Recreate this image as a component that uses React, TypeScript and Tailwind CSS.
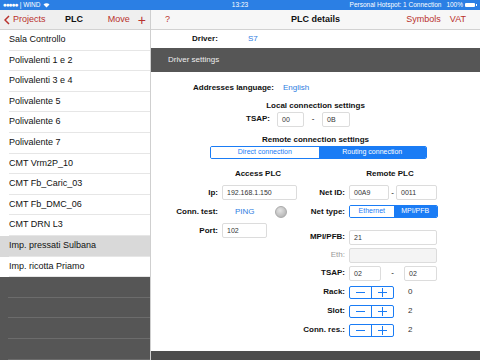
import React from "react";

const plcList = [
  "Sala Controllo",
  "Polivalenti 1 e 2",
  "Polivalenti 3 e 4",
  "Polivalente 5",
  "Polivalente 6",
  "Polivalente 7",
  "CMT Vrm2P_10",
  "CMT Fb_Caric_03",
  "CMT Fb_DMC_06",
  "CMT DRN L3",
  "Imp. pressati Sulbana",
  "Imp. ricotta Priamo",
];

const selected = "Imp. pressati Sulbana";

const StatusBar = () => (
  <div className="h-[10px] bg-[#2b7fe4] text-white text-[6.5px] leading-[10px] flex items-center px-[3px] relative">
    <div className="flex items-center gap-[2px]">
      <span className="tracking-[-1px]">●●●●●</span>
      <span>| WIND</span>
      <svg width="7" height="5" viewBox="0 0 14 10" className="ml-[1px]">
        <path d="M7 9 L1 3 A8.5 8.5 0 0 1 13 3 Z" fill="white" />
      </svg>
    </div>
    <div className="absolute left-0 right-0 text-center pointer-events-none">13:23</div>
    <div className="ml-auto flex items-center gap-[5px]">
      <span>Personal Hotspot: 1 Connection</span>
      <span className="flex items-center gap-[2px]">
        100%
        <span className="flex items-center">
          <span className="w-[10px] h-[4px] bg-white rounded-[1px]" />
          <span className="w-[1px] h-[2px] bg-white ml-[1px]" />
        </span>
      </span>
    </div>
  </div>
);

const Input = ({ value, w, disabled }: { value?: string; w: string; disabled?: boolean }) => (
  <div
    className={`${w} h-[15px] border border-[#dcdcdc] rounded-[2px] text-[7px] leading-[13px] pl-[4px] text-[#333] ${
      disabled ? "bg-[#f4f4f4]" : "bg-white"
    }`}
  >
    {value}
  </div>
);

const Segmented = ({ left, right, w, h }: { left: string; right: string; w: string; h: string }) => (
  <div className={`${w} ${h} flex border border-[#1a7cf5] rounded-[2px] text-[7px] overflow-hidden`}>
    <div className="flex-1 flex items-center justify-center text-[#1a7cf5] bg-white">{left}</div>
    <div className="flex-1 flex items-center justify-center text-white bg-[#1a7cf5]">{right}</div>
  </div>
);

const Stepper = () => (
  <div className="w-[45px] h-[13px] flex border border-[#1a7cf5] rounded-[2px] text-[#1a7cf5]">
    <div className="flex-1 flex items-center justify-center border-r border-[#1a7cf5]">
      <span className="w-[9px] h-[1px] bg-[#1a7cf5]" />
    </div>
    <div className="flex-1 flex items-center justify-center relative">
      <span className="w-[9px] h-[1px] bg-[#1a7cf5]" />
      <span className="absolute w-[1px] h-[9px] bg-[#1a7cf5]" />
    </div>
  </div>
);

const Label = ({ children, w, gray }: { children: React.ReactNode; w: string; gray?: boolean }) => (
  <div className={`${w} text-right pr-[4px] text-[8px] ${gray ? "text-[#9a9a9a] font-normal" : "font-bold text-[#111]"}`}>
    {children}
  </div>
);

export default function App() {
  return (
    <div className="w-[480px] h-[360px] overflow-hidden flex flex-col bg-white font-['Liberation_Sans',Arial,sans-serif]">
      <StatusBar />
      <div className="flex flex-1 min-h-0">
        {/* left: project list */}
        <aside className="w-[151px] border-r border-[#cfcfcf] flex flex-col">
          <div className="h-[20px] bg-[#efefef] border-b border-[#d2d2d2] flex items-center px-[4px] text-[9px] relative">
            <div className="flex items-center text-[#b9312d]">
              <svg width="6" height="10" viewBox="0 0 6 10">
                <path d="M5 1 L1 5 L5 9" fill="none" stroke="#b9312d" strokeWidth="1.5" />
              </svg>
              <span className="ml-[3px]">Projects</span>
            </div>
            <div className="absolute left-[65px] font-bold text-[#111]">PLC</div>
            <div className="ml-auto flex items-center gap-[8px] text-[#b9312d]">
              <span>Move</span>
              <span className="text-[14px] leading-none font-light">+</span>
            </div>
          </div>
          <div className="flex flex-col">
            {plcList.map((name) => (
              <div
                key={name}
                className={`h-[20.6px] flex items-center pl-[9px] text-[9px] text-[#111] ${
                  name === selected ? "bg-[#d9d9d9]" : "bg-white"
                }`}
              >
                <div className="flex-1 h-full flex items-center border-b border-[#e6e6e6]">{name}</div>
              </div>
            ))}
          </div>
          <div className="flex-1 bg-[#565656] flex flex-col">
            {[0, 1, 2, 3].map((i) => (
              <div key={i} className="h-[20.6px] ml-[8px] border-b border-[#6c6c6c]" />
            ))}
          </div>
        </aside>

        {/* right: PLC details */}
        <main className="flex-1 flex flex-col min-w-0">
          <div className="h-[20px] bg-[#f7f7f7] border-b border-[#d2d2d2] flex items-center px-[14px] text-[9px] relative">
            <span className="text-[#b9312d]">?</span>
            <div className="absolute left-0 right-0 text-center font-bold text-[#111]">PLC details</div>
            <div className="ml-auto flex items-center gap-[9px] text-[#b9312d] relative">
              <span>Symbols</span>
              <span>VAT</span>
            </div>
          </div>
          <div className="h-[18px] flex items-center text-[8px] pl-[41px]">
            <span className="w-[56px] font-bold text-[#111]">Driver:</span>
            <span className="text-[#2f7de1]">S7</span>
          </div>
          <div className="h-[24px] bg-[#565656] flex items-center pl-[17px] text-[8px] text-[#eee]">Driver settings</div>

          <div className="flex-1 flex flex-col">
            <div className="h-[12px] mt-[10px] flex items-center pl-[42px] text-[8px]">
              <span className="w-[90px] font-bold text-[#111]">Addresses language:</span>
              <span className="text-[#2f7de1]">English</span>
            </div>
            <div className="h-[12px] mt-[6px] flex items-center justify-center text-[8px] font-bold text-[#111]">
              Local connection settings
            </div>
            <div className="h-[14px] flex items-center pl-[95px]">
              <span className="w-[31px] text-[8px] font-bold text-[#111]">TSAP:</span>
              <Input value="00" w="w-[27px]" />
              <span className="w-[18px] text-center text-[8px]">-</span>
              <Input value="0B" w="w-[28px]" />
            </div>
            <div className="h-[12px] mt-[8px] flex items-center justify-center text-[8px] font-bold text-[#111]">
              Remote connection settings
            </div>
            <div className="pl-[59px]">
              <Segmented left="Direct connection" right="Routing connection" w="w-[217px]" h="h-[13px]" />
            </div>

            <div className="flex mt-[6px]">
              {/* Access PLC */}
              <div className="w-[149px] flex flex-col">
                <div className="h-[18px] ml-[57px] w-[100px] flex items-center justify-center text-[8px] font-bold text-[#111]">
                  Access PLC
                </div>
                <div className="h-[19px] flex items-center">
                  <Label w="w-[71px]">Ip:</Label>
                  <Input value="192.168.1.150" w="w-[75px]" />
                </div>
                <div className="h-[19px] flex items-center">
                  <Label w="w-[71px]">Conn. test:</Label>
                  <span className="ml-[13px] text-[8px] text-[#2f7de1]">PING</span>
                  <span className="ml-[20px] w-[12px] h-[12px] rounded-full border border-[#aaa] bg-[radial-gradient(circle_at_40%_35%,#e4e4e4,#a8a8a8)]" />
                </div>
                <div className="h-[19px] flex items-center">
                  <Label w="w-[71px]">Port:</Label>
                  <Input value="102" w="w-[45px]" />
                </div>
              </div>

              {/* Remote PLC */}
              <div className="flex-1 flex flex-col">
                <div className="h-[18px] ml-[40px] w-[100px] flex items-center justify-center text-[8px] font-bold text-[#111]">
                  Remote PLC
                </div>
                <div className="h-[19px] flex items-center">
                  <Label w="w-[49px]">Net ID:</Label>
                  <Input value="00A9" w="w-[40px]" />
                  <span className="w-[7px] text-center text-[8px]">-</span>
                  <Input value="0011" w="w-[41px]" />
                </div>
                <div className="h-[19px] flex items-center">
                  <Label w="w-[49px]">Net type:</Label>
                  <Segmented left="Ethernet" right="MPI/PFB" w="w-[89px]" h="h-[13px]" />
                </div>
                <div className="h-[18px] mt-[7px] flex items-center">
                  <Label w="w-[49px]">MPI/PFB:</Label>
                  <Input value="21" w="w-[88px]" />
                </div>
                <div className="h-[18px] flex items-center">
                  <Label w="w-[49px]" gray>
                    Eth:
                  </Label>
                  <Input w="w-[88px]" disabled />
                </div>
                <div className="h-[18.5px] flex items-center">
                  <Label w="w-[49px]">TSAP:</Label>
                  <Input value="02" w="w-[32px]" />
                  <span className="w-[23px] text-center text-[8px]">-</span>
                  <Input value="02" w="w-[33px]" />
                </div>
                {[
                  ["Rack:", "0"],
                  ["Slot:", "2"],
                  ["Conn. res.:", "2"],
                ].map(([label, val]) => (
                  <div key={label} className="h-[19px] flex items-center">
                    <Label w="w-[49px]">{label}</Label>
                    <Stepper />
                    <span className="ml-[14px] text-[8px] text-[#333]">{val}</span>
                  </div>
                ))}
              </div>
            </div>
          </div>
          <div className="h-[9px] bg-[#4d4d4d]" />
        </main>
      </div>
    </div>
  );
}
